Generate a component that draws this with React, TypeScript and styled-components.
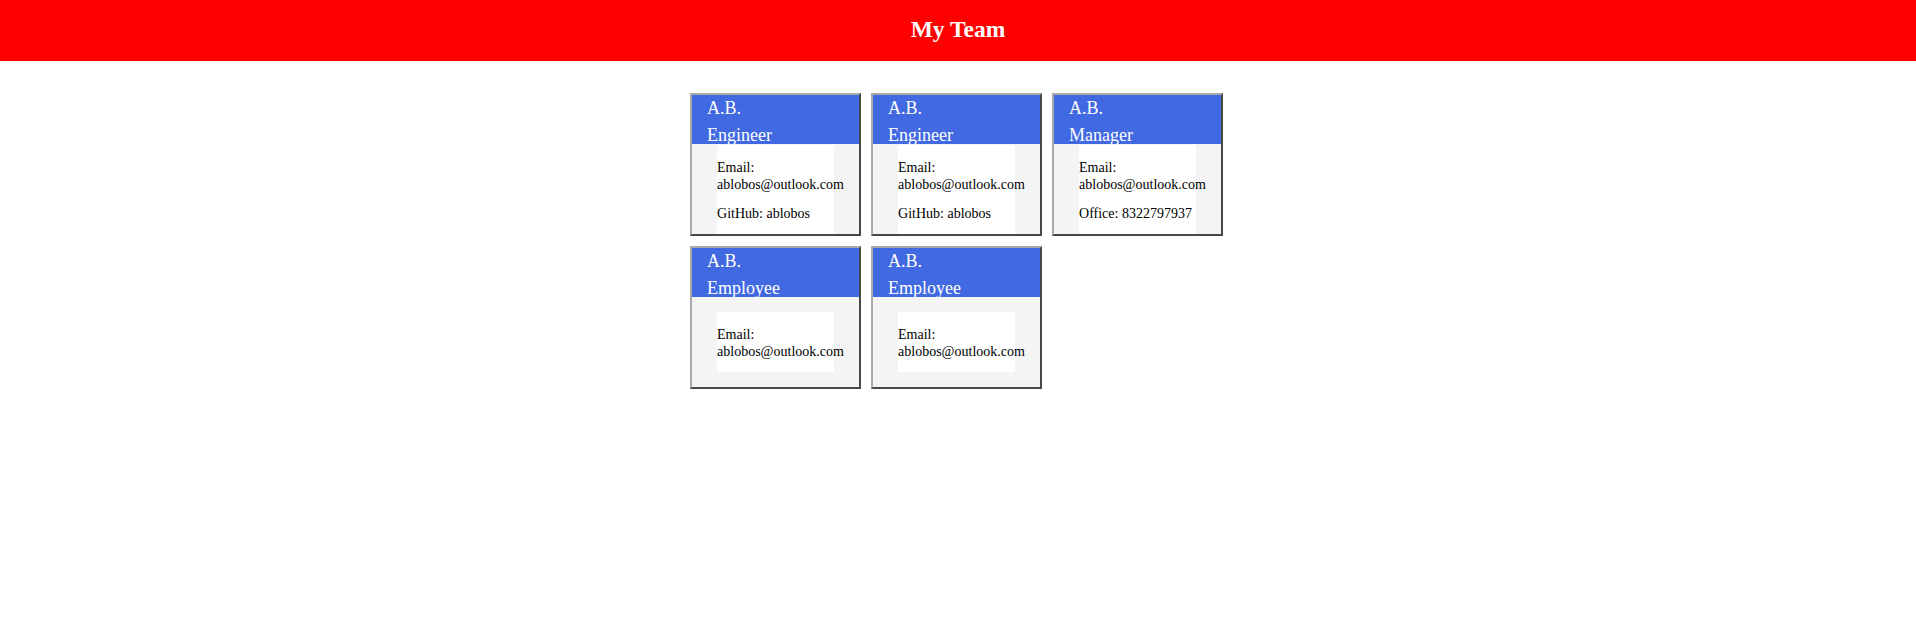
import React from "react";
import styled, { createGlobalStyle } from "styled-components";

const GlobalStyle = createGlobalStyle`
  html, body { margin: 0; padding: 0; background: #ffffff; }
  body { font-family: "Liberation Serif", "Times New Roman", serif; color: #000; }
  * { box-sizing: border-box; }
`;

const TopBar = styled.header`
  height: 61px;
  background: #ff0000;
  padding-top: 16px;
  text-align: center;
`;

const Title = styled.h1`
  margin: 0;
  font-size: 23.5px;
  line-height: 26px;
  font-weight: bold;
  color: #ffffff;
`;

const Grid = styled.main`
  width: 536px;
  margin: 32px auto 0;
  display: flex;
  flex-wrap: wrap;
  gap: 10px;
`;

const Card = styled.section`
  width: 171px;
  height: 143px;
  border: 2px solid;
  border-color: #a8a8a8 #484848 #484848 #a8a8a8;
  display: flex;
  flex-direction: column;
`;

const CardHead = styled.div`
  flex: 0 0 49px;
  height: 49px;
  background: #4169e1;
  color: #ffffff;
  padding: 3px 15px 0;
  font-size: 18px;
  line-height: 21px;
`;

const Role = styled.div`
  margin-top: 6px;
`;

const CardBody = styled.div`
  flex: 1;
  background: #f4f4f4;
  display: flex;
  align-items: center;
  justify-content: center;
`;

const InfoList = styled.ul`
  list-style: none;
  margin: 0;
  width: 70%;
  background: #ffffff;
  padding: 14px 0 0 0;
  font-size: 14px;
  line-height: 17px;
  white-space: nowrap;
`;

const InfoItem = styled.li`
  margin-bottom: 12px;
`;

type Member = { role: string; extra?: string };

const members: Member[] = [
  { role: "Engineer", extra: "GitHub: ablobos" },
  { role: "Engineer", extra: "GitHub: ablobos" },
  { role: "Manager", extra: "Office: 8322797937" },
  { role: "Employee" },
  { role: "Employee" },
];

export default function App() {
  return (
    <>
      <GlobalStyle />
      <TopBar>
        <Title>My Team</Title>
      </TopBar>
      <Grid>
        {members.map((m, i) => (
          <Card key={i}>
            <CardHead>
              <div>A.B.</div>
              <Role>{m.role}</Role>
            </CardHead>
            <CardBody>
              <InfoList>
                <InfoItem>
                  Email:
                  <br />
                  ablobos@outlook.com
                </InfoItem>
                {m.extra && <InfoItem>{m.extra}</InfoItem>}
              </InfoList>
            </CardBody>
          </Card>
        ))}
      </Grid>
    </>
  );
}
